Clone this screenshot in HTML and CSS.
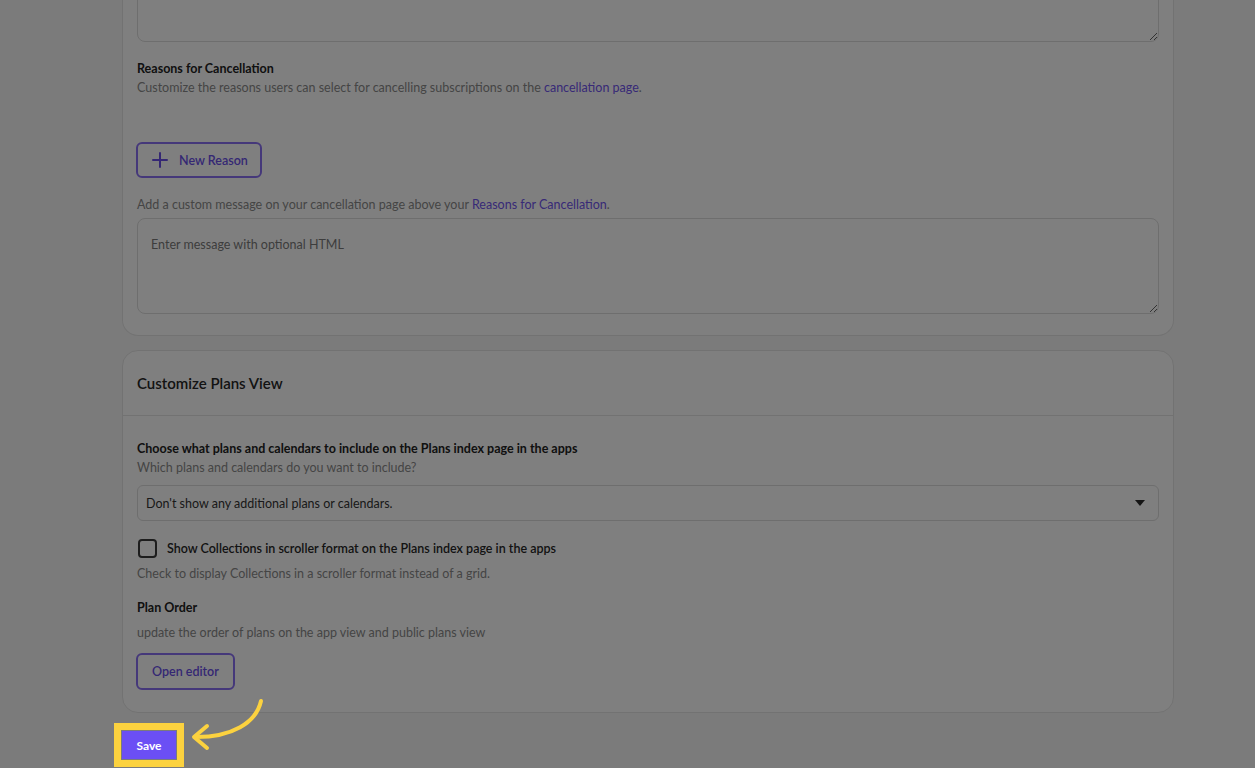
FILE: index.html
```html
<!DOCTYPE html>
<html lang="en">
<head>
<meta charset="utf-8">
<title>Settings</title>
<link rel="stylesheet" href="styles.css">
</head>
<body>
<div class="main">
  <section class="card card-first">
    <textarea class="textarea textarea-top"></textarea>
    <div class="field-title gap-18">Reasons for Cancellation</div>
    <div class="help gap-1">Customize the reasons users can select for cancelling subscriptions on the <a class="link" href="#">cancellation page</a>.</div>
    <button class="btn-outline btn-new" type="button">
      <svg class="plus" width="16" height="16" viewBox="0 0 16 16"><path d="M8 1v14M1 8h14" stroke="currentColor" stroke-width="2" fill="none" stroke-linecap="round"/></svg>
      <span>New Reason</span>
    </button>
    <div class="help gap-18">Add a custom message on your cancellation page above your <a class="link" href="#">Reasons for Cancellation</a>.</div>
    <textarea class="textarea textarea-msg" placeholder="Enter message with optional HTML"></textarea>
  </section>

  <section class="card card-plans">
    <header class="card-header">Customize Plans View</header>
    <div class="card-body">
      <div class="field-title">Choose what plans and calendars to include on the Plans index page in the apps</div>
      <div class="help gap-1">Which plans and calendars do you want to include?</div>
      <div class="select">
        <span>Don't show any additional plans or calendars.</span>
        <svg class="caret" width="10" height="6" viewBox="0 0 10 6"><path d="M0 0h10L5 6z" fill="#2b2b2b"/></svg>
      </div>
      <label class="check-row">
        <span class="checkbox"></span>
        <span class="check-label">Show Collections in scroller format on the Plans index page in the apps</span>
      </label>
      <div class="help gap-8">Check to display Collections in a scroller format instead of a grid.</div>
      <div class="field-title gap-16">Plan Order</div>
      <div class="help gap-7">update the order of plans on the app view and public plans view</div>
      <button class="btn-outline btn-editor" type="button">Open editor</button>
    </div>
  </section>

  <div class="actions">
    <button class="btn-save" type="button">Save</button>
    <svg class="arrow" width="90" height="60" viewBox="0 0 90 60">
      <path d="M79 3 C 74 25, 50 39, 14 39" stroke="#fcd23f" stroke-width="4" fill="none" stroke-linecap="round"/>
      <path d="M25 28 L 12 39 L 25 50" stroke="#fcd23f" stroke-width="4" fill="none" stroke-linecap="round" stroke-linejoin="round"/>
    </svg>
  </div>
</div>
<div class="dim"></div>
</body>
</html>
```
FILE: styles.css
```css
* { box-sizing: border-box; }
html, body { margin: 0; padding: 0; height: 100%; overflow: hidden; }
body {
  background: #f6f6f6;
  font-family: "Lato", "Liberation Sans", sans-serif;
  color: #222;
  font-size: 12.5px;
}
.main {
  width: 1052px;
  margin-left: 122px;
  margin-top: -60px;
}
.card {
  background: #fff;
  border: 1px solid #e5e5e5;
  border-radius: 16px;
}
.card-first {
  padding: 0 14px 21px;
  border-top: none;
  border-top-left-radius: 0;
  border-top-right-radius: 0;
}
.textarea {
  display: block;
  width: 100%;
  border: 1px solid #dcdcdc;
  border-radius: 8px;
  background: #fff;
  font-family: inherit;
  font-size: 12.5px;
  resize: vertical;
  padding: 18px 13px;
  outline: none;
}
.textarea-top { height: 102px; }
.textarea-msg { height: 96px; margin-top: 4px; }
.textarea-msg::placeholder { color: #7a7a7a; }
.field-title {
  font-weight: 700;
  line-height: 18px;
  color: #222;
}
.help {
  line-height: 18px;
  color: #8a8a8a;
}
.link { color: #7054ee; text-decoration: none; }
.gap-18 { margin-top: 18px; }
.gap-16 { margin-top: 16px; }
.gap-8 { margin-top: 8px; }
.gap-7 { margin-top: 7px; }
.gap-1 { margin-top: 1px; }
.btn-outline {
  display: flex;
  align-items: center;
  background: #fff;
  border: 2px solid #8b70f5;
  border-radius: 6px;
  color: #6a4fe8;
  font-family: inherit;
  font-size: 12.5px;
  font-weight: 600;
  white-space: nowrap;
  cursor: pointer;
}
.btn-new {
  margin-top: 45px;
  margin-left: -1px;
  height: 36px;
  padding: 0 12px 0 14px;
  gap: 11px;
}
.plus { flex: none; }
.card-plans { margin-top: 14px; }
.card-header {
  height: 65px;
  display: flex;
  align-items: center;
  padding: 0 14px;
  border-bottom: 1px solid #e5e5e5;
  font-size: 15px;
  font-weight: 600;
  color: #262626;
}
.card-body { padding: 24px 14px 22px; }
.select {
  margin-top: 8px;
  height: 36px;
  border: 1px solid #dcdcdc;
  border-radius: 6px;
  display: flex;
  align-items: center;
  justify-content: space-between;
  padding: 0 13px 0 8px;
  color: #333;
}
.check-row {
  margin-top: 18px;
  display: flex;
  align-items: center;
  gap: 10px;
  height: 18px;
}
.checkbox {
  width: 19px;
  height: 19px;
  border: 2px solid #3a3a3a;
  border-radius: 4px;
  margin-left: 1px;
  flex: none;
}
.check-label { font-weight: 600; color: #262626; }
.btn-editor {
  margin-top: 11px;
  margin-left: -1px;
  height: 37px;
  padding: 0 14px;
}
.actions {
  margin-top: 18px;
  position: relative;
  z-index: 20;
}
.btn-save {
  display: block;
  width: 54px;
  height: 28px;
  border: none;
  border-radius: 0;
  background: #6b4ff5;
  color: #fff;
  font-family: inherit;
  font-size: 12px;
  font-weight: 700;
  outline: 7px solid #fcd23f;
  outline-offset: 1px;
}
.arrow {
  position: absolute;
  left: 60px;
  top: -33px;
}
.dim {
  position: fixed;
  inset: 0;
  background: rgba(0, 0, 0, 0.5);
  z-index: 10;
}
```
